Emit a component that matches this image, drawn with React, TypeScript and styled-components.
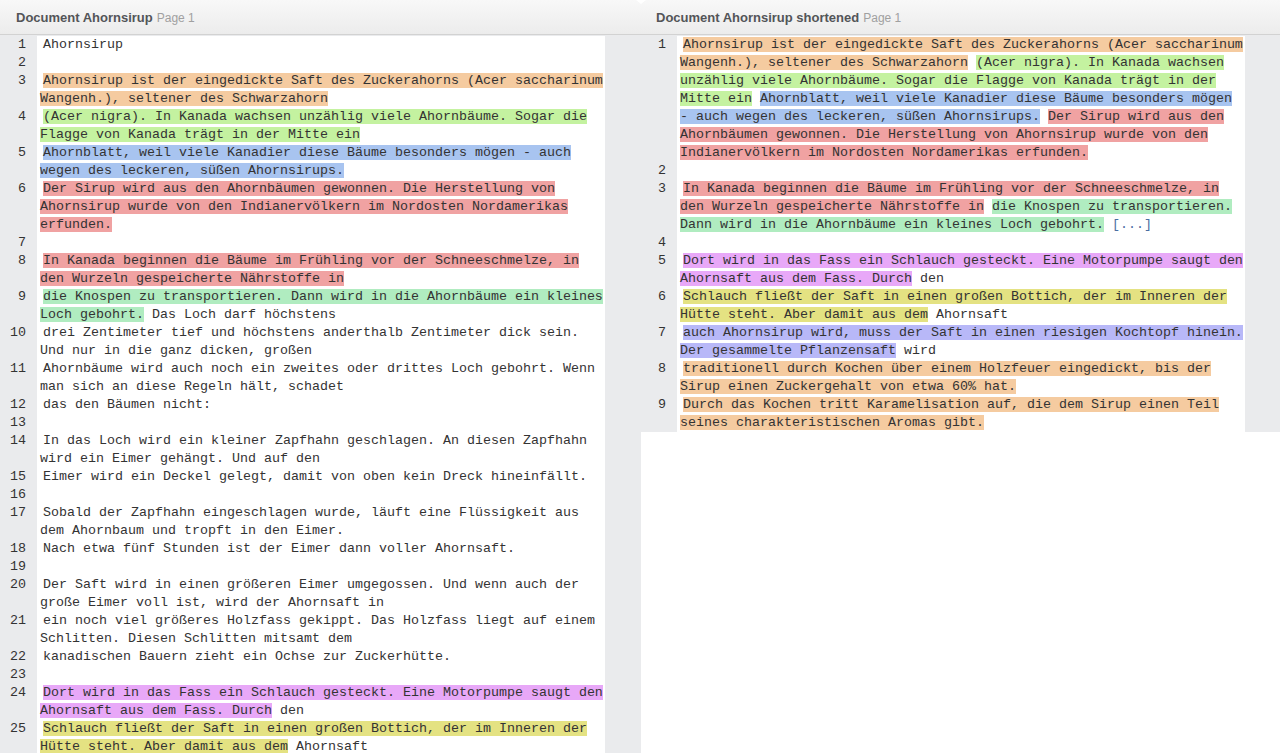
import React from 'react';
import styled, { createGlobalStyle } from 'styled-components';

const Global = createGlobalStyle`
  html, body { margin: 0; padding: 0; background: #fff; overflow: hidden; }
`;

type Seg = { t: string; c?: string; more?: boolean };
type Line = Seg[];

const C = {
  peach: '#f5cba0',
  green: '#c4f2a0',
  blue: '#a8c4f0',
  red: '#f0a2a2',
  mint: '#b0ecc0',
  violet: '#e8a8f8',
  yellow: '#e4e282',
  lavender: '#b8b8f8',
};

const leftLines: Line[] = [
  [{ t: 'Ahornsirup' }],
  [],
  [{ t: 'Ahornsirup ist der eingedickte Saft des Zuckerahorns (Acer saccharinum Wangenh.), seltener des Schwarzahorn', c: C.peach }],
  [{ t: '(Acer nigra). In Kanada wachsen unzählig viele Ahornbäume. Sogar die Flagge von Kanada trägt in der Mitte ein', c: C.green }],
  [{ t: 'Ahornblatt, weil viele Kanadier diese Bäume besonders mögen - auch wegen des leckeren, süßen Ahornsirups.', c: C.blue }],
  [{ t: 'Der Sirup wird aus den Ahornbäumen gewonnen. Die Herstellung von Ahornsirup wurde von den Indianervölkern im Nordosten Nordamerikas erfunden.', c: C.red }],
  [],
  [{ t: 'In Kanada beginnen die Bäume im Frühling vor der Schneeschmelze, in den Wurzeln gespeicherte Nährstoffe in', c: C.red }],
  [{ t: 'die Knospen zu transportieren. Dann wird in die Ahornbäume ein kleines Loch gebohrt.', c: C.mint }, { t: ' Das Loch darf höchstens' }],
  [{ t: 'drei Zentimeter tief und höchstens anderthalb Zentimeter dick sein. Und nur in die ganz dicken, großen' }],
  [{ t: 'Ahornbäume wird auch noch ein zweites oder drittes Loch gebohrt. Wenn man sich an diese Regeln hält, schadet' }],
  [{ t: 'das den Bäumen nicht:' }],
  [],
  [{ t: 'In das Loch wird ein kleiner Zapfhahn geschlagen. An diesen Zapfhahn wird ein Eimer gehängt. Und auf den' }],
  [{ t: 'Eimer wird ein Deckel gelegt, damit von oben kein Dreck hineinfällt.' }],
  [],
  [{ t: 'Sobald der Zapfhahn eingeschlagen wurde, läuft eine Flüssigkeit aus dem Ahornbaum und tropft in den Eimer.' }],
  [{ t: 'Nach etwa fünf Stunden ist der Eimer dann voller Ahornsaft.' }],
  [],
  [{ t: 'Der Saft wird in einen größeren Eimer umgegossen. Und wenn auch der große Eimer voll ist, wird der Ahornsaft in' }],
  [{ t: 'ein noch viel größeres Holzfass gekippt. Das Holzfass liegt auf einem Schlitten. Diesen Schlitten mitsamt dem' }],
  [{ t: 'kanadischen Bauern zieht ein Ochse zur Zuckerhütte.' }],
  [],
  [{ t: 'Dort wird in das Fass ein Schlauch gesteckt. Eine Motorpumpe saugt den Ahornsaft aus dem Fass. Durch', c: C.violet }, { t: ' den' }],
  [{ t: 'Schlauch fließt der Saft in einen großen Bottich, der im Inneren der Hütte steht. Aber damit aus dem', c: C.yellow }, { t: ' Ahornsaft' }],
  [{ t: 'auch Ahornsirup wird, muss der Saft in einen riesigen Kochtopf hinein. Der gesammelte Pflanzensaft', c: C.lavender }, { t: ' wird' }],
  [{ t: 'traditionell durch Kochen über einem Holzfeuer eingedickt, bis der Sirup einen Zuckergehalt von etwa 60% hat.', c: C.peach }],
];

const rightLines: Line[] = [
  [
    { t: 'Ahornsirup ist der eingedickte Saft des Zuckerahorns (Acer saccharinum Wangenh.), seltener des Schwarzahorn', c: C.peach },
    { t: ' ' },
    { t: '(Acer nigra). In Kanada wachsen unzählig viele Ahornbäume. Sogar die Flagge von Kanada trägt in der Mitte ein', c: C.green },
    { t: ' ' },
    { t: 'Ahornblatt, weil viele Kanadier diese Bäume besonders mögen - auch wegen des leckeren, süßen Ahornsirups.', c: C.blue },
    { t: ' ' },
    { t: 'Der Sirup wird aus den Ahornbäumen gewonnen. Die Herstellung von Ahornsirup wurde von den Indianervölkern im Nordosten Nordamerikas erfunden.', c: C.red },
  ],
  [],
  [
    { t: 'In Kanada beginnen die Bäume im Frühling vor der Schneeschmelze, in den Wurzeln gespeicherte Nährstoffe in', c: C.red },
    { t: ' ' },
    { t: 'die Knospen zu transportieren. Dann wird in die Ahornbäume ein kleines Loch gebohrt.', c: C.mint },
    { t: ' ' },
    { t: '[...]', more: true },
  ],
  [],
  [{ t: 'Dort wird in das Fass ein Schlauch gesteckt. Eine Motorpumpe saugt den Ahornsaft aus dem Fass. Durch', c: C.violet }, { t: ' den' }],
  [{ t: 'Schlauch fließt der Saft in einen großen Bottich, der im Inneren der Hütte steht. Aber damit aus dem', c: C.yellow }, { t: ' Ahornsaft' }],
  [{ t: 'auch Ahornsirup wird, muss der Saft in einen riesigen Kochtopf hinein. Der gesammelte Pflanzensaft', c: C.lavender }, { t: ' wird' }],
  [{ t: 'traditionell durch Kochen über einem Holzfeuer eingedickt, bis der Sirup einen Zuckergehalt von etwa 60% hat.', c: C.peach }],
  [{ t: 'Durch das Kochen tritt Karamelisation auf, die dem Sirup einen Teil seines charakteristischen Aromas gibt.', c: C.peach }],
];

const Page = styled.div`
  position: relative;
  width: 1280px;
  height: 753px;
  display: flex;
  flex-direction: column;
  overflow: hidden;
  background: #fff;
  font-family: "Liberation Sans", Arial, sans-serif;
`;

const Header = styled.div`
  position: relative;
  display: flex;
  height: 34px;
  flex-shrink: 0;
  border-bottom: 1px solid #d2d2d2;
  background: linear-gradient(#f8f8f8, #ececec);
`;

const HeaderCell = styled.div<{ $w: number }>`
  width: ${(p) => p.$w}px;
  box-sizing: border-box;
  padding-left: 16px;
  padding-top: 1px;
  display: flex;
  align-items: center;
  white-space: nowrap;
`;

const Title = styled.span`
  font-size: 13px;
  font-weight: bold;
  color: #535558;
`;

const PageLabel = styled.span`
  margin-left: 4px;
  font-size: 12px;
  color: #a0a0a0;
`;

const Caret = styled.div`
  position: absolute;
  left: 636px;
  top: 0;
  width: 0;
  height: 0;
  border-left: 5px solid transparent;
  border-right: 5px solid transparent;
  border-top: 4px solid #ffffff;
`;

const Body = styled.div`
  display: flex;
  flex: 1;
  min-height: 0;
`;

const Pane = styled.div<{ $w: number }>`
  width: ${(p) => p.$w}px;
  flex-shrink: 0;
  overflow: hidden;
  background: #fff;
`;

const Doc = styled.div<{ $gutter: number; $margin: number }>`
  display: grid;
  grid-template-columns: ${(p) => p.$gutter}px 568px;
  padding-right: ${(p) => p.$margin}px;
  padding-top: 1px;
  background: #eaebed;
  font-family: "Liberation Mono", "Courier New", monospace;
  font-size: 13.333px;
  line-height: 18px;
  color: #333;
`;

const Num = styled.div`
  text-align: right;
  padding-right: 11px;
`;

const Text = styled.div`
  min-height: 18px;
  background: #fff;
  padding-left: 3px;
  text-indent: 3px;
`;

const Hl = styled.span<{ $c: string }>`
  background: ${(p) => p.$c};
`;

const More = styled.span`
  color: #4a6ea2;
`;

function Document({ lines, gutter, margin }: { lines: Line[]; gutter: number; margin: number }) {
  return (
    <Doc $gutter={gutter} $margin={margin}>
      {lines.map((line, i) => (
        <React.Fragment key={i}>
          <Num>{i + 1}</Num>
          <Text>
            {line.map((s, j) =>
              s.c ? (
                <Hl key={j} $c={s.c}>{s.t}</Hl>
              ) : s.more ? (
                <More key={j}>{s.t}</More>
              ) : (
                <React.Fragment key={j}>{s.t}</React.Fragment>
              )
            )}
          </Text>
        </React.Fragment>
      ))}
    </Doc>
  );
}

export default function App() {
  return (
    <Page>
      <Global />
      <Header>
        <HeaderCell $w={640}>
          <Title>Document Ahornsirup</Title>
          <PageLabel>Page 1</PageLabel>
        </HeaderCell>
        <HeaderCell $w={640}>
          <Title>Document Ahornsirup shortened</Title>
          <PageLabel>Page 1</PageLabel>
        </HeaderCell>
        <Caret />
      </Header>
      <Body>
        <Pane $w={641}>
          <Document lines={leftLines} gutter={37} margin={36} />
        </Pane>
        <Pane $w={639}>
          <Document lines={rightLines} gutter={36} margin={35} />
        </Pane>
      </Body>
    </Page>
  );
}
